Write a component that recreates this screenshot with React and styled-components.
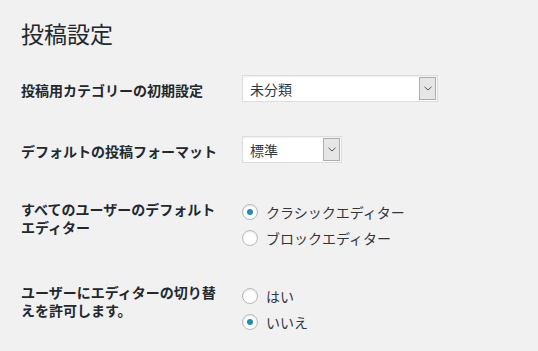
import React from "react";
import styled, { createGlobalStyle } from "styled-components";

const Global = createGlobalStyle`
  html, body { margin: 0; padding: 0; background: #f1f1f1; }
  body {
    font-family: "Noto Sans CJK JP", "Noto Sans", sans-serif;
    color: #23282d;
    -webkit-font-smoothing: antialiased;
  }
`;

const Wrap = styled.div`
  padding: 18px 0 0 21px;
  width: 517px;
  height: 333px;
  overflow: hidden;
`;

const Title = styled.h1`
  margin: 0;
  font-size: 23px;
  font-weight: 400;
  line-height: 30px;
  color: #23282d;
`;

const Form = styled.div`
  display: flex;
  flex-direction: column;
`;

const Row = styled.div`
  display: flex;
  align-items: flex-start;
  margin-top: ${(p) => p.$top}px;
`;

const Label = styled.div`
  width: 200px;
  margin-right: 21px;
  padding-top: ${(p) => p.$pad || 0}px;
  font-size: 14px;
  font-weight: 700;
  line-height: 18px;
  color: #23282d;
`;

const Cell = styled.div`
  display: flex;
  flex-direction: column;
`;

const Select = styled.div`
  box-sizing: border-box;
  width: ${(p) => p.$w}px;
  height: 27px;
  background: #fff;
  border: 1px solid #ddd;
  box-shadow: inset 0 1px 2px rgba(0, 0, 0, 0.07);
  display: flex;
  align-items: center;
  justify-content: space-between;
  padding: 1px 1px 1px 7px;
  font-size: 14px;
  color: #32373c;
`;

const SelectText = styled.span`
  line-height: 20px;
`;

const Arrow = styled.span`
  box-sizing: border-box;
  width: 17px;
  height: 23px;
  background: #e6e6e6;
  border: 1px solid #adadad;
  display: flex;
  align-items: center;
  justify-content: center;
`;

const Option = styled.label`
  display: flex;
  align-items: center;
  height: 26px;
  font-size: 14px;
  color: #32373c;
`;

const Radio = styled.span`
  box-sizing: border-box;
  width: 16px;
  height: 16px;
  border-radius: 50%;
  border: 1px solid #b4b9be;
  background: #fff;
  box-shadow: inset 0 1px 2px rgba(0, 0, 0, 0.1);
  margin-right: 8px;
  display: flex;
  align-items: center;
  justify-content: center;
  flex-shrink: 0;
`;

const Dot = styled.span`
  width: 6px;
  height: 6px;
  border-radius: 50%;
  background: #1e8cbe;
`;

const Chevron = () => (
  <svg width="8" height="5" viewBox="0 0 8 5">
    <path d="M0.5 0.8 L4 4 L7.5 0.8" fill="none" stroke="#555" strokeWidth="1" />
  </svg>
);

const Dropdown = ({ w, value }) => (
  <Select $w={w}>
    <SelectText>{value}</SelectText>
    <Arrow>
      <Chevron />
    </Arrow>
  </Select>
);

const RadioOption = ({ checked, children }) => (
  <Option>
    <Radio>{checked && <Dot />}</Radio>
    {children}
  </Option>
);

export default function App() {
  return (
    <>
      <Global />
      <Wrap>
        <Title>投稿設定</Title>
        <Form>
          <Row $top={27}>
            <Label $pad={6}>投稿用カテゴリーの初期設定</Label>
            <Cell>
              <Dropdown w={196} value="未分類" />
            </Cell>
          </Row>
          <Row $top={34}>
            <Label $pad={6}>デフォルトの投稿フォーマット</Label>
            <Cell>
              <Dropdown w={100} value="標準" />
            </Cell>
          </Row>
          <Row $top={36}>
            <Label $pad={1}>すべてのユーザーのデフォルトエディター</Label>
            <Cell>
              <RadioOption checked>クラシックエディター</RadioOption>
              <RadioOption>ブロックエディター</RadioOption>
            </Cell>
          </Row>
          <Row $top={32}>
            <Label $pad={0}>ユーザーにエディターの切り替えを許可します。</Label>
            <Cell>
              <RadioOption>はい</RadioOption>
              <RadioOption checked>いいえ</RadioOption>
            </Cell>
          </Row>
        </Form>
      </Wrap>
    </>
  );
}
